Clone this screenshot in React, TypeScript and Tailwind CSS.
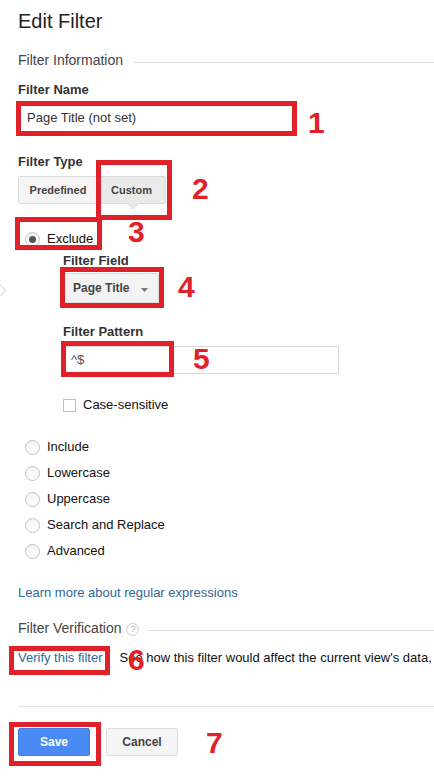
import React from 'react';

const RED = 'border-[#e0212a]';

function Radio({ checked = false }: { checked?: boolean }) {
    return (
        <span className="flex items-center justify-center w-[15px] h-[15px] rounded-full border border-[#c4c4c4] bg-gradient-to-b from-[#f4f4f4] to-white shrink-0">
            {checked && <span className="w-[7px] h-[7px] rounded-full bg-[#555]" />}
        </span>
    );
}

function RadioRow({ label, checked = false }: { label: string; checked?: boolean }) {
    return (
        <div className="flex items-center h-[16px] pl-[7px] gap-[7px] text-[13px] leading-[16px] text-[#111]">
            <Radio checked={checked} />
            <span>{label}</span>
        </div>
    );
}

function Mark({ className }: { className: string }) {
    return <div className={`absolute border-[5px] ${RED} ${className}`} />;
}

function Num({ n, className }: { n: string; className: string }) {
    return (
        <div className={`absolute text-[30px] leading-[30px] font-bold text-[#e0212a] ${className}`}>{n}</div>
    );
}

export default function App() {
    return (
        <div className="relative w-[434px] h-[778px] overflow-hidden bg-white font-['Liberation_Sans',Arial,sans-serif] text-[#222]">
            <div className="pl-[18px] pt-[9px]">
                <h1 className="text-[20px] leading-[24px] text-[#222]">Edit Filter</h1>

                <div className="flex items-center mt-[18px] h-[18px]">
                    <span className="text-[14px] leading-[18px] text-[#444]">Filter Information</span>
                    <div className="flex-1 h-px bg-[#e0e0e0] ml-[10px] mt-[4px]" />
                </div>

                <div className="mt-[13px] text-[13px] leading-[16px] font-bold text-[#333]">Filter Name</div>
                <div className="mt-[5px] w-[277px] h-[30px] border border-[#ccc] flex items-center pl-[8px] text-[13px] text-[#333]">
                    Page Title (not set)
                </div>

                <div className="mt-[21px] text-[13px] leading-[16px] font-bold text-[#333]">Filter Type</div>
                <div className="relative mt-[6px] flex w-[148px] h-[28px] border border-[#dcdcdc] rounded-[2px] text-[11px] font-bold text-[#444]">
                    <div className="flex items-center justify-center w-[79px] bg-[#f5f5f5] border-r border-[#dcdcdc]">Predefined</div>
                    <div className="flex items-center justify-center flex-1 bg-[#eaeaea]">Custom</div>
                    <svg className="absolute left-[108px] top-[26px]" width="12" height="7" viewBox="0 0 12 7">
                        <path d="M0 0 L6 6 L12 0 Z" fill="#e6e6e6" />
                        <path d="M0 0 L6 6 L12 0" fill="none" stroke="#dcdcdc" />
                    </svg>
                </div>

                <div className="mt-[27px]">
                    <RadioRow label="Exclude" checked />
                </div>

                <div className="ml-[45px]">
                    <div className="mt-[6px] text-[13px] leading-[16px] font-bold text-[#333]">Filter Field</div>
                    <div className="mt-[4px] flex items-center justify-between w-[96px] h-[30px] pl-[9px] pr-[10px] border border-[#dcdcdc] rounded-[2px] bg-[#f3f3f3] text-[12px] font-bold text-[#444]">
                        <span>Page Title</span>
                        <svg width="7" height="4" viewBox="0 0 7 4" className="mt-[3px]">
                            <path d="M0 0 L7 0 L3.5 4 Z" fill="#777" />
                        </svg>
                    </div>

                    <div className="mt-[21px] text-[13px] leading-[16px] font-bold text-[#333]">Filter Pattern</div>
                    <div className="mt-[6px] w-[276px] h-[28px] border border-[#d9d9d9] flex items-center pl-[7px] text-[13px] text-[#555]">
                        ^$
                    </div>

                    <div className="mt-[23px] flex items-center h-[16px] gap-[7px] text-[13px] text-[#111]">
                        <span className="w-[13px] h-[13px] border border-[#c0c0c0] bg-white" />
                        <span>Case-sensitive</span>
                    </div>
                </div>

                <div className="mt-[26px] flex flex-col gap-[10px]">
                    <RadioRow label="Include" />
                    <RadioRow label="Lowercase" />
                    <RadioRow label="Uppercase" />
                    <RadioRow label="Search and Replace" />
                    <RadioRow label="Advanced" />
                </div>

                <div className="mt-[26px] text-[13px] leading-[16px] text-[#30689a]">Learn more about regular expressions</div>

                <div className="flex items-center mt-[18px] h-[18px]">
                    <span className="text-[14px] leading-[18px] text-[#444]">Filter Verification</span>
                    <span className="ml-[5px] mt-[3px] flex items-center justify-center w-[13px] h-[13px] rounded-full border border-[#ccc] text-[9px] leading-none text-[#aaa]">?</span>
                    <div className="flex-1 h-px bg-[#e0e0e0] ml-[9px] mt-[4px]" />
                </div>

                <div className="mt-[13px] flex items-center h-[16px] whitespace-nowrap text-[13px] leading-[16px]">
                    <span className="text-[#30689a]">Verify this filter</span>
                    <span className="ml-[17px] text-[#111]">See how this filter would affect the current view's data,</span>
                </div>

                <div className="mt-[40px] h-px bg-[#e5e5e5]" />

                <div className="mt-[21px] flex gap-[16px] text-[12px] font-bold">
                    <div className="flex items-center justify-center w-[72px] h-[28px] rounded-[2px] bg-[#4a8af4] border border-[#3d7ee8] text-white">Save</div>
                    <div className="flex items-center justify-center w-[72px] h-[28px] rounded-[2px] bg-[#f5f5f5] border border-[#dcdcdc] text-[#444]">Cancel</div>
                </div>
            </div>

            <div className="absolute left-[-7px] top-[285px] w-[11px] h-[11px] rotate-45 border-t border-r border-[#ddd]" />

            <Mark className="left-[16px] top-[101px] w-[281px] h-[35px]" />
            <Mark className="left-[96px] top-[160px] w-[76px] h-[60px]" />
            <Mark className="left-[15px] top-[217px] w-[87px] h-[33px]" />
            <Mark className="left-[60px] top-[267px] w-[104px] h-[41px]" />
            <Mark className="left-[61px] top-[341px] w-[113px] h-[36px]" />
            <Mark className="left-[9px] top-[646px] w-[101px] h-[29px]" />
            <Mark className="left-[9px] top-[722px] w-[92px] h-[44px]" />

            <Num n="1" className="left-[308px] top-[108px]" />
            <Num n="2" className="left-[192px] top-[174px]" />
            <Num n="3" className="left-[128px] top-[217px]" />
            <Num n="4" className="left-[178px] top-[272px]" />
            <Num n="5" className="left-[193px] top-[344px]" />
            <Num n="6" className="left-[128px] top-[645px]" />
            <Num n="7" className="left-[206px] top-[728px]" />
        </div>
    );
}
